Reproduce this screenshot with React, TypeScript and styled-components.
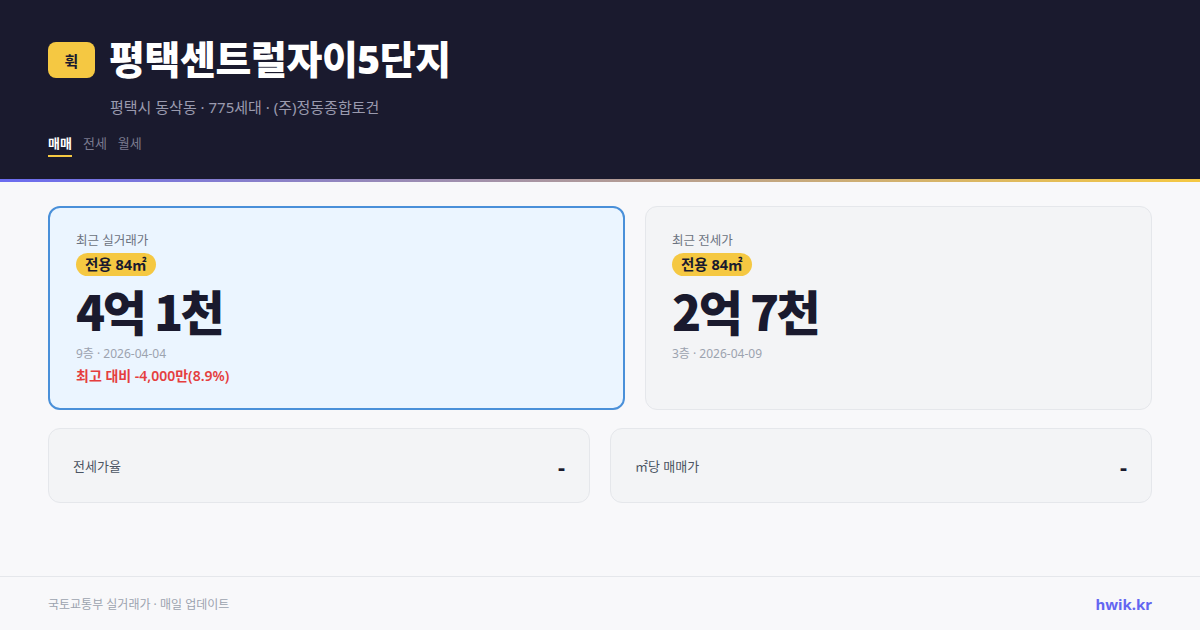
import styled, { createGlobalStyle } from 'styled-components';

const GlobalStyle = createGlobalStyle`
  html, body {
    margin: 0;
    padding: 0;
    background: #f8f8fa;
  }
  body {
    font-family: "Noto Sans", "Noto Sans CJK KR", sans-serif;
    width: 1200px;
    height: 630px;
    overflow: hidden;
  }
`;

const Page = styled.div`
  width: 1200px;
  height: 630px;
  display: flex;
  flex-direction: column;
  background: #f8f8fa;
`;

const Header = styled.header`
  background: #1a1a2e;
  padding: 35px 48px 0;
  height: 182px;
  box-sizing: border-box;
  border-bottom: 3px solid transparent;
  border-image: linear-gradient(90deg, #6b6cf0, #f5c842) 1;
`;

const TitleRow = styled.div`
  display: flex;
  align-items: center;
  gap: 14px;
`;

const Logo = styled.div`
  width: 47px;
  height: 36px;
  border-radius: 8px;
  background: #f5c842;
  color: #1a1a2e;
  font-size: 15px;
  font-weight: 700;
  display: flex;
  align-items: center;
  justify-content: center;
  margin-top: 2px;
`;

const Title = styled.h1`
  margin: 0;
  color: #ffffff;
  font-size: 39px;
  font-weight: 900;
  letter-spacing: -0.4px;
  line-height: 48px;
`;

const Subtitle = styled.div`
  margin: 14px 0 0 62px;
  color: #9a9aae;
  font-size: 15px;
  line-height: 20px;
`;

const Tabs = styled.nav`
  display: flex;
  gap: 11px;
  margin-top: 17px;
`;

const Tab = styled.span<{ $active?: boolean }>`
  font-size: 13px;
  line-height: 18px;
  padding-bottom: 3px;
  font-weight: ${({ $active }) => ($active ? 700 : 400)};
  color: ${({ $active }) => ($active ? '#ffffff' : '#7a7a8e')};
  border-bottom: 2px solid ${({ $active }) => ($active ? '#f5c842' : 'transparent')};
`;

const Main = styled.main`
  flex: 1;
  padding: 24px 48px 0;
  display: flex;
  flex-direction: column;
  gap: 18px;
`;

const TopRow = styled.div`
  display: grid;
  grid-template-columns: 577fr 507fr;
  gap: 20px;
`;

const PriceCard = styled.section<{ $highlight?: boolean }>`
  height: 204px;
  box-sizing: border-box;
  border-radius: 12px;
  padding: ${({ $highlight }) => ($highlight ? '24px 26px' : '25px 26px')};
  background: ${({ $highlight }) => ($highlight ? '#ebf5ff' : '#f3f4f6')};
  border: ${({ $highlight }) => ($highlight ? '2px solid #4a90d9' : '1px solid #e5e7eb')};
  display: flex;
  flex-direction: column;
  align-items: flex-start;
`;

const CardLabel = styled.div`
  font-size: 12.5px;
  color: #6b7280;
  line-height: 18px;
`;

const AreaBadge = styled.span`
  margin-top: 3px;
  background: #f5c842;
  color: #1a1a2e;
  font-size: 14.5px;
  font-weight: 700;
  border-radius: 12px;
  padding: 0 9px;
  line-height: 23px;
`;

const Price = styled.div`
  font-family: "Noto Sans CJK KR", sans-serif;
  font-size: 48px;
  font-weight: 900;
  color: #1a1a2e;
  letter-spacing: -2.5px;
  word-spacing: 1px;
  line-height: 66px;
  margin-top: 1px;
`;

const Meta = styled.div`
  font-size: 12px;
  color: #9ca3af;
  line-height: 18px;
  margin-top: 2px;
`;

const Diff = styled.div`
  font-size: 14px;
  font-weight: 600;
  color: #e53e3e;
  line-height: 20px;
  margin-top: 3px;
`;

const BottomRow = styled.div`
  display: grid;
  grid-template-columns: 1fr 1fr;
  gap: 20px;
`;

const StatCard = styled.div`
  height: 75px;
  box-sizing: border-box;
  border-radius: 12px;
  background: #f3f4f6;
  border: 1px solid #e5e7eb;
  padding: 0 24px;
  display: flex;
  align-items: center;
  justify-content: space-between;
`;

const StatLabel = styled.span`
  font-size: 13px;
  color: #4b5563;
`;

const StatValue = styled.span`
  font-size: 22px;
  font-weight: 700;
  color: #1a1a2e;
`;

const Footer = styled.footer`
  height: 53px;
  border-top: 1px solid #e5e7eb;
  padding: 0 48px;
  display: flex;
  align-items: center;
  justify-content: space-between;
`;

const Source = styled.span`
  font-size: 12px;
  color: #9ca3af;
`;

const Brand = styled.span`
  font-size: 15px;
  font-weight: 700;
  color: #6366f1;
`;

export default function App() {
  return (
    <>
      <GlobalStyle />
      <Page>
        <Header>
          <TitleRow>
            <Logo>휙</Logo>
            <Title>평택센트럴자이5단지</Title>
          </TitleRow>
          <Subtitle>평택시 동삭동 · 775세대 · (주)정동종합토건</Subtitle>
          <Tabs>
            <Tab $active>매매</Tab>
            <Tab>전세</Tab>
            <Tab>월세</Tab>
          </Tabs>
        </Header>
        <Main>
          <TopRow>
            <PriceCard $highlight>
              <CardLabel>최근 실거래가</CardLabel>
              <AreaBadge>전용 84㎡</AreaBadge>
              <Price>4억 1천</Price>
              <Meta>9층 · 2026-04-04</Meta>
              <Diff>최고 대비 -4,000만(8.9%)</Diff>
            </PriceCard>
            <PriceCard>
              <CardLabel>최근 전세가</CardLabel>
              <AreaBadge>전용 84㎡</AreaBadge>
              <Price>2억 7천</Price>
              <Meta>3층 · 2026-04-09</Meta>
            </PriceCard>
          </TopRow>
          <BottomRow>
            <StatCard>
              <StatLabel>전세가율</StatLabel>
              <StatValue>-</StatValue>
            </StatCard>
            <StatCard>
              <StatLabel>㎡당 매매가</StatLabel>
              <StatValue>-</StatValue>
            </StatCard>
          </BottomRow>
        </Main>
        <Footer>
          <Source>국토교통부 실거래가 · 매일 업데이트</Source>
          <Brand>hwik.kr</Brand>
        </Footer>
      </Page>
    </>
  );
}
